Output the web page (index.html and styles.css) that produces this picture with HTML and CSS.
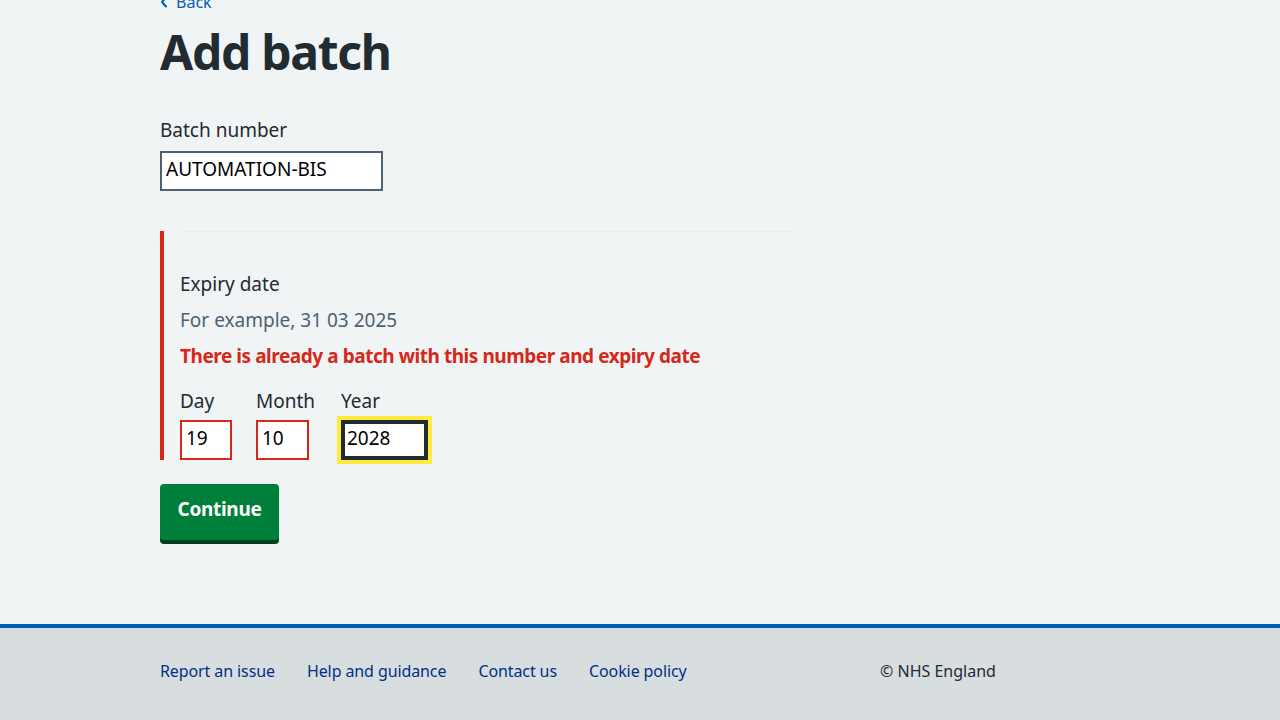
FILE: index.html
```html
<!DOCTYPE html>
<html lang="en">
<head>
<meta charset="utf-8">
<title>Add batch</title>
<link rel="stylesheet" href="styles.css">
</head>
<body>
<main class="page">
  <div class="wrapper">
    <a class="back" href="#"><svg class="back-icon" viewBox="0 0 8 12" width="8" height="12" aria-hidden="true"><path d="M6 1.5 L2 6 L6 10.5" fill="none" stroke="#005eb8" stroke-width="2" stroke-linecap="round" stroke-linejoin="round"/></svg><span>Back</span></a>
    <h1 class="title">Add batch</h1>

    <div class="field">
      <label class="label" for="batch">Batch number</label>
      <input class="input batch-input" id="batch" type="text" value="AUTOMATION-BIS">
    </div>

    <div class="group-error">
      <div class="rule"></div>
      <div class="label legend">Expiry date</div>
      <div class="hint">For example, 31 03 2025</div>
      <div class="error-message">There is already a batch with this number and expiry date</div>
      <div class="date">
        <div class="date-item date-day">
          <label class="label small-label">Day</label>
          <input class="input date-input err" type="text" value="19">
        </div>
        <div class="date-item date-month">
          <label class="label small-label">Month</label>
          <input class="input date-input err month-input" type="text" value="10">
        </div>
        <div class="date-item date-year">
          <label class="label small-label">Year</label>
          <input class="input date-input year-input" type="text" value="2028">
        </div>
      </div>
    </div>

    <button class="button" type="button">Continue</button>
  </div>
</main>
<footer class="footer">
  <div class="wrapper footer-inner">
    <ul class="footer-list">
      <li><a href="#">Report an issue</a></li>
      <li><a href="#">Help and guidance</a></li>
      <li><a href="#">Contact us</a></li>
      <li><a href="#">Cookie policy</a></li>
    </ul>
    <p class="copyright">© NHS England</p>
  </div>
</footer>
</body>
</html>
```

FILE: styles.css
```css
* { box-sizing: border-box; }
html, body {
  margin: 0;
  padding: 0;
  background: #f0f4f5;
  font-family: "Noto Sans", "Open Sans", sans-serif;
  color: #212b32;
  overflow: hidden;
}
.wrapper {
  width: 960px;
  margin: 0 auto;
}
.page {
  display: flow-root;
  height: 624px;
}
.page .wrapper {
  margin-top: -10px;
  display: flow-root;
}
.back {
  display: inline-flex;
  align-items: center;
  gap: 8px;
  height: 24px;
  font-size: 16px;
  line-height: 24px;
  color: #005eb8;
  text-decoration: none;
}
.title {
  margin: 10px 0 0;
  font-size: 48px;
  line-height: 56px;
  font-weight: 700;
  letter-spacing: -1.3px;
}
.label {
  display: block;
  font-size: 19px;
  line-height: 28px;
}
.field { margin-top: 36px; }
.field .label { margin-bottom: 7px; }
.input {
  display: block;
  height: 40px;
  border: 2px solid #4c6272;
  background: #fff;
  font-family: inherit;
  font-size: 19px;
  color: #000;
  padding: 0 4px 4px;
  margin: 0;
  border-radius: 0;
  outline: none;
}
.batch-input { width: 223px; }
.group-error {
  margin-top: 40px;
  border-left: 4px solid #d5281b;
  padding-left: 16px;
  height: 229px;
}
.rule {
  height: 1px;
  width: 607px;
  margin-left: 3px;
  background: #e6ebec;
}
.legend { margin-top: 38px; }
.hint {
  margin-top: 8px;
  font-size: 19px;
  line-height: 28px;
  color: #4c6272;
}
.error-message {
  margin-top: 8px;
  font-size: 19px;
  line-height: 28px;
  font-weight: 700;
  color: #d5281b;
  letter-spacing: -0.45px;
}
.date {
  display: flex;
  margin-top: 17px;
}
.date-item { margin-right: 24px; }
.date-day { width: 52px; }
.date-month { width: 61px; }
.small-label { margin-bottom: 5px; }
.date-input { width: 52px; }
.month-input { width: 53px; }
.err { border-color: #d5281b; }
.year-input {
  width: 87px;
  border: 4px solid #212b32;
  padding: 0 2px 4px;
  box-shadow: 0 0 0 4px #ffeb3b;
}
.button {
  display: block;
  margin-top: 24px;
  width: 119px;
  height: 56px;
  border: 0;
  border-radius: 4px;
  background: #007f3b;
  box-shadow: 0 4px 0 #00401e;
  color: #fff;
  font-family: inherit;
  font-size: 19px;
  font-weight: 700;
  padding: 0 0 6px;
  letter-spacing: -0.3px;
}
.footer {
  border-top: 4px solid #005eb8;
  background: #d8dde0;
  height: 120px;
}
.footer-inner {
  display: flex;
  padding-top: 31px;
}
.footer-list {
  display: flex;
  gap: 32px;
  list-style: none;
  margin: 0;
  padding: 0;
  width: 720px;
}
.footer-list a {
  color: #003087;
  font-size: 16px;
  line-height: 24px;
  text-decoration: none;
  letter-spacing: -0.1px;
}
.copyright {
  margin: 0;
  font-size: 16px;
  line-height: 24px;
  color: #212b32;
}
```
